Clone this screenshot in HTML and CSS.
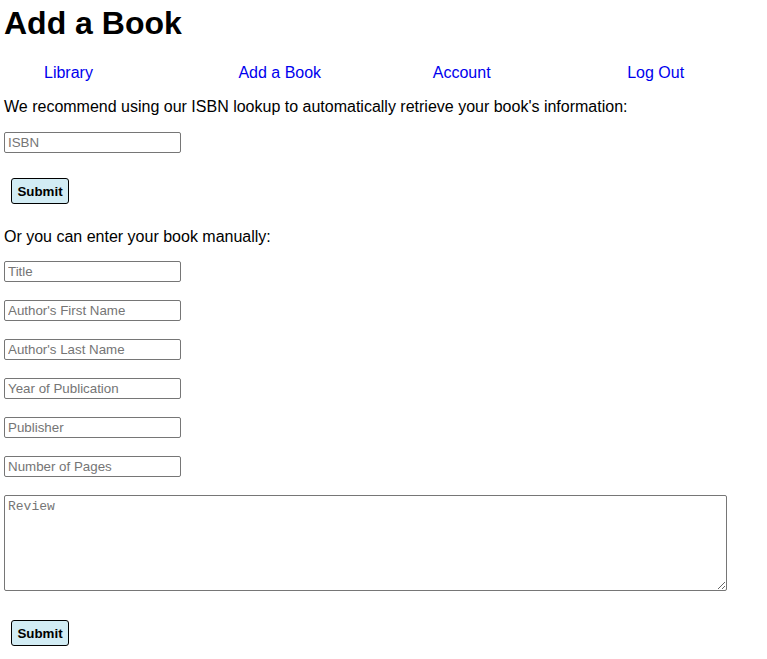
FILE: index.html
```html
<!DOCTYPE html>
<html lang="en">
<head>
<meta charset="utf-8">
<title>Add a Book</title>
<link rel="stylesheet" href="styles.css">
</head>
<body>
<div class="page">
  <h1 class="title">Add a Book</h1>
  <nav class="nav">
    <a href="#">Library</a>
    <a href="#">Add a Book</a>
    <a href="#">Account</a>
    <a href="#">Log Out</a>
  </nav>
  <p class="intro">We recommend using our ISBN lookup to automatically retrieve your book's information:</p>
  <form class="isbn-form">
    <input class="field" type="text" placeholder="ISBN">
    <button class="submit" type="button">Submit</button>
  </form>
  <p class="manual">Or you can enter your book manually:</p>
  <form class="manual-form">
    <input class="field" type="text" placeholder="Title">
    <input class="field" type="text" placeholder="Author's First Name">
    <input class="field" type="text" placeholder="Author's Last Name">
    <input class="field" type="text" placeholder="Year of Publication">
    <input class="field" type="text" placeholder="Publisher">
    <input class="field" type="text" placeholder="Number of Pages">
    <textarea class="review" placeholder="Review"></textarea>
    <button class="submit submit-last" type="button">Submit</button>
  </form>
</div>
</body>
</html>
```
FILE: styles.css
```css
html, body {
  margin: 0;
  padding: 0;
  background: #fff;
}
body {
  font-family: "Liberation Sans", Arial, sans-serif;
  font-size: 16px;
  color: #000;
}
.page {
  padding: 5px 4px 0 4px;
}
.title {
  margin: 0;
  font-size: 32px;
  font-weight: bold;
  line-height: 37px;
}
.nav {
  display: grid;
  grid-template-columns: repeat(3, 194.4px) auto;
  justify-content: start;
  padding-left: 40px;
  margin-top: 22px;
  line-height: 18px;
}
.nav a {
  color: #0000ee;
  text-decoration: none;
}
.intro, .manual {
  margin: 0;
  line-height: 18px;
}
.intro {
  margin-top: 16px;
}
.isbn-form, .manual-form {
  display: flex;
  flex-direction: column;
  align-items: flex-start;
}
.isbn-form {
  margin-top: 16px;
}
.field {
  box-sizing: border-box;
  width: 177px;
  height: 21px;
  margin: 0;
  padding: 1px 3px;
  border: 1px solid #767676;
  border-radius: 2px;
  font-family: "Liberation Sans", Arial, sans-serif;
  font-size: 13.33px;
  color: #000;
  background: #fff;
}
.field::placeholder {
  color: #757575;
}
.manual-form .field + .field {
  margin-top: 18px;
}
.submit {
  box-sizing: border-box;
  width: 58px;
  height: 26px;
  margin: 25px 0 0 7px;
  padding: 0;
  border: 1px solid #000;
  border-radius: 3px;
  background: #d2ecf4;
  font-family: "Liberation Sans", Arial, sans-serif;
  font-size: 13.33px;
  font-weight: bold;
  color: #000;
}
.manual {
  margin-top: 24px;
}
.manual-form {
  margin-top: 15px;
}
.review {
  box-sizing: border-box;
  width: 723px;
  height: 96px;
  margin: 18px 0 0 0;
  padding: 3px 3px;
  border: 1px solid #767676;
  border-radius: 2px;
  font-family: "Liberation Mono", "DejaVu Sans Mono", monospace;
  font-size: 13px;
  resize: both;
}
.review::placeholder {
  color: #757575;
}
.submit-last {
  margin-top: 29px;
}
```
